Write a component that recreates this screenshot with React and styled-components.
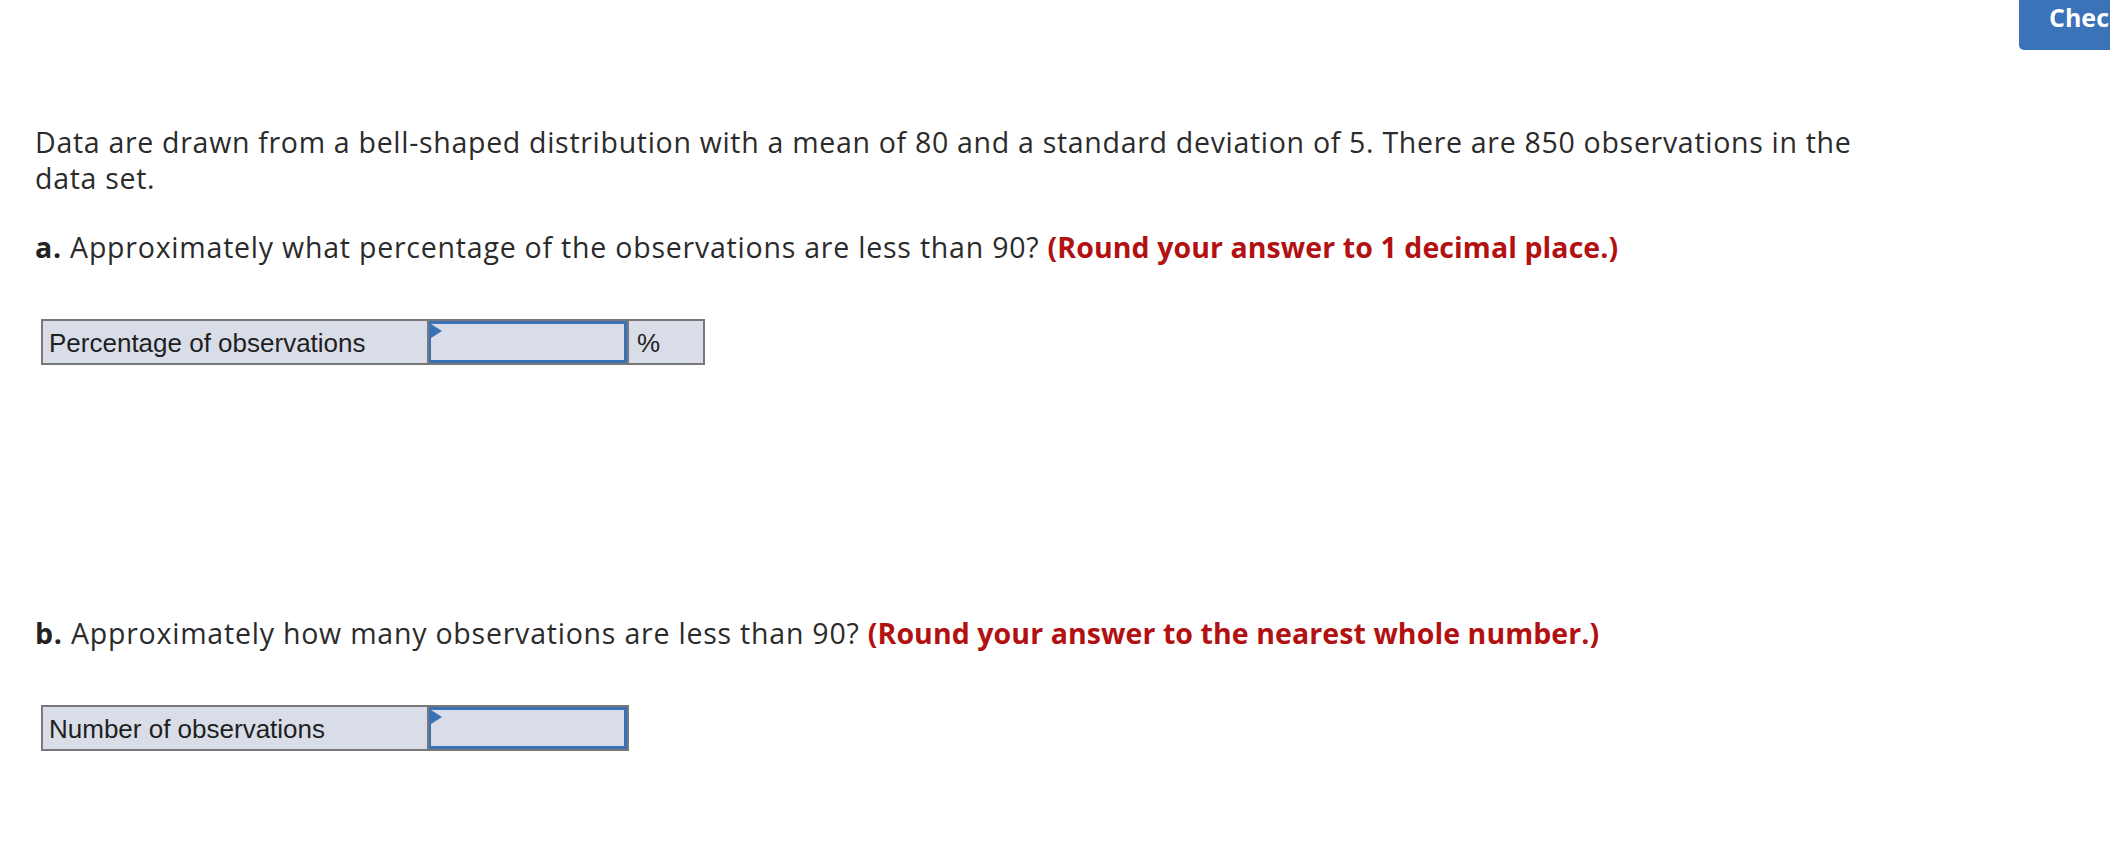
import React from "react";
import styled, { createGlobalStyle } from "styled-components";

const GlobalStyle = createGlobalStyle`
  html, body {
    margin: 0;
    padding: 0;
    background: #ffffff;
    overflow: hidden;
  }
  body {
    font-family: "Open Sans", Lato, sans-serif;
    color: #2b2b2b;
  }
`;

function FlagInput() {
  return (
    <InputCell>
      <Flag />
    </InputCell>
  );
}

function AnswerRow({ label, unit }) {
  return (
    <AnswerTable>
      <LabelCell>{label}</LabelCell>
      <FlagInput />
      {unit && <UnitCell>{unit}</UnitCell>}
    </AnswerTable>
  );
}

export default function App() {
  return (
    <Page>
      <GlobalStyle />
      <Toolbar>
        <CheckButton>Check my work</CheckButton>
      </Toolbar>
      <Content>
        <Question>
          Data are drawn from a bell-shaped distribution with a mean of 80 and a
          standard deviation of 5. There are 850 observations in the data set.
        </Question>

        <Part>
          <strong>a.</strong> Approximately what percentage of the observations
          are less than 90? <Hint>(Round your answer to 1 decimal place.)</Hint>
        </Part>
        <AnswerRow label="Percentage of observations" unit="%" />

        <Part $top={250}>
          <strong>b.</strong> Approximately how many observations are less than
          90? <Hint>(Round your answer to the nearest whole number.)</Hint>
        </Part>
        <AnswerRow label="Number of observations" />
      </Content>
    </Page>
  );
}

const Page = styled.div`
  width: 2110px;
  min-height: 866px;
  overflow: hidden;
`;

const Toolbar = styled.div`
  display: flex;
  justify-content: flex-end;
  height: 50px;
`;

const CheckButton = styled.button`
  width: 230px;
  height: 50px;
  margin-right: -139px;
  padding: 4px 0 0 30px;
  display: flex;
  align-items: flex-start;
  border: 0;
  border-radius: 0 0 0 5px;
  background-color: #3b73b9;
  color: #ffffff;
  font-family: "Open Sans", Lato, sans-serif;
  font-size: 25px;
  line-height: 26px;
  font-weight: bold;
  white-space: nowrap;
`;

const Content = styled.div`
  padding: 74px 0 0 35px;
`;

const Question = styled.p`
  width: 1860px;
  margin: 0;
  font-size: 28.5px;
  line-height: 36px;
  letter-spacing: 0.7px;
`;

const Part = styled.p`
  margin: ${(p) => p.$top || 33}px 0 54px;
  font-size: 28.5px;
  line-height: 36px;
  letter-spacing: 0.78px;

  strong {
    color: #222222;
  }
`;

const Hint = styled.strong`
  color: #b21111 !important;
  font-weight: bold;
  letter-spacing: 0.08px;
`;

const AnswerTable = styled.div`
  display: flex;
  width: fit-content;
  height: 42px;
  margin-left: 6px;
  border: 2px solid #787878;
  background-color: #d9dde7;
  font-family: "Liberation Sans", Arial, sans-serif;
  font-size: 26px;
  color: #1f1f1f;
`;

const LabelCell = styled.div`
  width: 378px;
  padding: 2px 0 0 6px;
  display: flex;
  align-items: center;
  border-right: 2px solid #787878;
`;

const InputCell = styled.div`
  position: relative;
  width: 193px;
  border: 3px solid #3a72b7;
  border-left-width: 2px;
`;

const Flag = styled.span`
  position: absolute;
  top: 0;
  left: 0;
  width: 0;
  height: 0;
  border-top: 7px solid transparent;
  border-bottom: 7px solid transparent;
  border-left: 11px solid #3a72b7;
`;

const UnitCell = styled.div`
  width: 66px;
  padding: 2px 0 0 8px;
  display: flex;
  align-items: center;
  border-left: 2px solid #787878;
`;
